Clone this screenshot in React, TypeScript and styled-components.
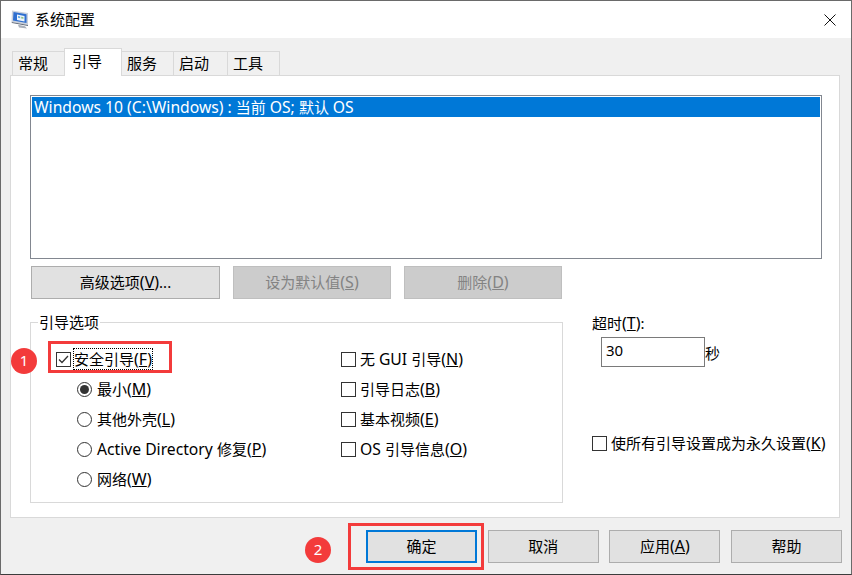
import React from 'react';
import styled, { createGlobalStyle } from 'styled-components';

const GlobalStyle = createGlobalStyle`
  html, body {
    margin: 0;
    background: #fff;
  }
  * {
    box-sizing: border-box;
  }
  body {
    font-family: "Noto Sans", "Noto Sans CJK SC", sans-serif;
    font-size: 15px;
    color: #000;
  }
`;

const Window = styled.div`
  position: relative;
  width: 852px;
  height: 575px;
  display: flex;
  flex-direction: column;
  overflow: hidden;
  border: 1px solid #6a6a6a;
  border-bottom-color: #3c3c3c;
`;

const TitleBar = styled.header`
  height: 37px;
  flex: none;
  display: flex;
  align-items: center;
  padding-left: 10px;
  background: #fff;
`;

const Title = styled.span`
  margin: 0 0 2px 4px;
  line-height: 20px;
`;

const CloseIcon = styled.svg`
  margin-left: auto;
  margin-right: 15px;
`;

const Main = styled.main`
  flex: 1;
  display: flex;
  flex-direction: column;
  padding: 10px 9px 0;
  background: #f0f0f0;
`;

const TabStrip = styled.div`
  height: 28px;
  display: flex;
  align-items: flex-end;
  padding-left: 3px;
  margin-bottom: -1px;
`;

const Tab = styled.div<{ $active?: boolean; $w: number }>`
  position: relative;
  z-index: ${(p) => (p.$active ? 1 : 0)};
  width: ${(p) => p.$w}px;
  height: ${(p) => (p.$active ? 28 : 25)}px;
  margin-left: -1px;
  padding-left: ${(p) => (p.$active ? 7 : 5)}px;
  line-height: ${(p) => (p.$active ? 24 : 23)}px;
  background: ${(p) => (p.$active ? '#fff' : '#f0f0f0')};
  border: 1px solid #d9d9d9;
  border-bottom: ${(p) => (p.$active ? 'none' : '1px solid #d9d9d9')};
`;

const Panel = styled.section`
  width: 830px;
  height: 443px;
  padding: 19px 17px 0 19px;
  background: #fff;
  border: 1px solid #d9d9d9;
`;

const ListBox = styled.div`
  height: 164px;
  padding: 1px;
  border: 1px solid #828790;
`;

const ListRow = styled.div`
  height: 20px;
  padding-left: 2px;
  line-height: 20px;
  color: #fff;
  background: #0078d7;
  white-space: nowrap;
`;

const Latin = styled.span`
  font-size: 15.7px;
`;

const AccessKey = styled.span`
  font-size: 16px;
`;

const ActionRow = styled.div`
  display: flex;
  gap: 13px;
  margin: 7px 0 13px 1px;
`;

const Button = styled.button<{ $w: number; $primary?: boolean }>`
  width: ${(p) => p.$w}px;
  height: 33px;
  padding: 0 0 2px;
  font: inherit;
  color: #000;
  background: #e1e1e1;
  border: ${(p) => (p.$primary ? '2px solid #0078d7' : '1px solid #adadad')};

  &:disabled {
    color: #838383;
    background: #cccccc;
    border-color: #bfbfbf;
  }
`;

const OptionsRow = styled.div`
  display: flex;
  gap: 29px;
`;

const GroupBox = styled.fieldset`
  flex: none;
  width: 533px;
  height: 191px;
  margin: 0;
  padding: 12px 0 0 25px;
  display: grid;
  grid-template-columns: 285px 1fr;
  border: 1px solid #d9d9d9;
`;

const GroupTitle = styled.legend`
  margin-left: -18px;
  padding: 0 1px;
  line-height: 20px;
`;

const OptionColumn = styled.div`
  display: flex;
  flex-direction: column;
`;

const Option = styled.label<{ $indent?: boolean }>`
  height: 30px;
  display: flex;
  align-items: center;
  gap: ${(p) => (p.$indent ? 5 : 4)}px;
  margin-left: ${(p) => (p.$indent ? 21 : 0)}px;
  line-height: 20px;
  white-space: nowrap;
`;

const Box = styled.span`
  flex: none;
  width: 15px;
  height: 15px;
  display: flex;
  border: 1px solid #333;
`;

const Radio = styled.span<{ $on?: boolean }>`
  flex: none;
  width: 15px;
  height: 15px;
  display: flex;
  align-items: center;
  justify-content: center;
  border: 1px solid #333;
  border-radius: 50%;

  &::after {
    content: '';
    display: ${(p) => (p.$on ? 'block' : 'none')};
    width: 9px;
    height: 9px;
    border-radius: 50%;
    background: #333;
  }
`;

const FocusText = styled.span`
  margin-left: -1px;
  outline: 1px dotted #000;
`;

const SideColumn = styled.div`
  display: flex;
  flex-direction: column;
`;

const TimeoutRow = styled.div`
  display: flex;
  align-items: center;
  margin: 3px 0 0 9px;
`;

const TimeoutInput = styled.div`
  width: 104px;
  height: 30px;
  padding-left: 4px;
  line-height: 25px;
  border: 1px solid #7a7a7a;
`;

const SideOption = styled(Option)`
  margin-top: 61px;
`;

const Footer = styled.footer`
  display: flex;
  justify-content: flex-end;
  gap: 10.67px;
  margin-top: 12px;
`;

const RedFrame = styled.div<{ $x: number; $y: number; $w: number; $h: number }>`
  position: absolute;
  left: ${(p) => p.$x}px;
  top: ${(p) => p.$y}px;
  width: ${(p) => p.$w}px;
  height: ${(p) => p.$h}px;
  border: 3px solid #f33b3b;
  pointer-events: none;
`;

const Badge = styled.div<{ $x: number; $y: number }>`
  position: absolute;
  left: ${(p) => p.$x}px;
  top: ${(p) => p.$y}px;
  width: 26px;
  height: 26px;
  border-radius: 50%;
  background: #f33b3b;
  color: #fff;
  font-size: 15px;
  line-height: 25px;
  text-align: center;
`;

const AppIcon = () => (
  <svg width="20" height="20" viewBox="0 0 20 20">
    <path d="M1 .5 17 3v12L.5 12z" fill="#c9d0dc" />
    <path d="M2.5 2 15.5 4.3V13L2 10.5z" fill="#2f6fd0" />
    <path d="M6 4.6 13.5 6v5.4L6 10z" fill="#eef5fb" />
    <path d="M7 6l2.2.4v1.8L7 7.8z" fill="#5fa8e8" />
    <path d="M10.2 6.8l2.3.4v1.6l-2.3-.4z" fill="#8cc084" />
    <path d="M.5 12 17 15v1L1 13z" fill="#5d6675" />
    <path d="M7 14.8l7 1.4 2 2.3-8-1z" fill="#aab0ba" />
  </svg>
);

const Check = () => (
  <svg width="13" height="13" viewBox="0 0 13 13">
    <path d="M2 6.5 5 9.5 11 3" fill="none" stroke="#333" strokeWidth="1.3" />
  </svg>
);

const Key = ({ k }: { k: string }) => (
  <AccessKey>
    (<u>{k}</u>)
  </AccessKey>
);

export default function App() {
  return (
    <>
      <GlobalStyle />
      <Window>
        <TitleBar>
          <AppIcon />
          <Title>系统配置</Title>
          <CloseIcon width="12" height="12" viewBox="0 0 12 12">
            <path d="M0.5 0.5 11.5 11.5M11.5 0.5 0.5 11.5" stroke="#111" strokeWidth="1" />
          </CloseIcon>
        </TitleBar>
        <Main>
          <TabStrip>
            <Tab $w={53}>常规</Tab>
            <Tab $w={58} $active>
              引导
            </Tab>
            <Tab $w={53}>服务</Tab>
            <Tab $w={55}>启动</Tab>
            <Tab $w={53}>工具</Tab>
          </TabStrip>
          <Panel>
            <ListBox>
              <ListRow>
                <Latin>Windows 10 (C:\Windows) : </Latin>当前 <Latin>OS; </Latin>默认 <Latin>OS</Latin>
              </ListRow>
            </ListBox>
            <ActionRow>
              <Button $w={189}>
                高级选项
                <Key k="V" />
                ...
              </Button>
              <Button $w={158} disabled>
                设为默认值
                <Key k="S" />
              </Button>
              <Button $w={158} disabled>
                删除
                <Key k="D" />
              </Button>
            </ActionRow>
            <OptionsRow>
              <GroupBox>
                <GroupTitle>引导选项</GroupTitle>
                <OptionColumn>
                  <Option>
                    <Box>
                      <Check />
                    </Box>
                    <FocusText>
                      安全引导
                      <Key k="F" />
                    </FocusText>
                  </Option>
                  <Option $indent>
                    <Radio $on />
                    <span>
                      最小
                      <Key k="M" />
                    </span>
                  </Option>
                  <Option $indent>
                    <Radio />
                    <span>
                      其他外壳
                      <Key k="L" />
                    </span>
                  </Option>
                  <Option $indent>
                    <Radio />
                    <span>
                      <Latin>Active Directory </Latin>修复
                      <Key k="P" />
                    </span>
                  </Option>
                  <Option $indent>
                    <Radio />
                    <span>
                      网络
                      <Key k="W" />
                    </span>
                  </Option>
                </OptionColumn>
                <OptionColumn>
                  <Option>
                    <Box />
                    <span>
                      无 <Latin>GUI </Latin>引导
                      <Key k="N" />
                    </span>
                  </Option>
                  <Option>
                    <Box />
                    <span>
                      引导日志
                      <Key k="B" />
                    </span>
                  </Option>
                  <Option>
                    <Box />
                    <span>
                      基本视频
                      <Key k="E" />
                    </span>
                  </Option>
                  <Option>
                    <Box />
                    <span>
                      <Latin>OS </Latin>引导信息
                      <Key k="O" />
                    </span>
                  </Option>
                </OptionColumn>
              </GroupBox>
              <SideColumn>
                <span>
                  超时
                  <Key k="T" />:
                </span>
                <TimeoutRow>
                  <TimeoutInput>30</TimeoutInput>
                  <span>秒</span>
                </TimeoutRow>
                <SideOption>
                  <Box />
                  <span>
                    使所有引导设置成为永久设置
                    <Key k="K" />
                  </span>
                </SideOption>
              </SideColumn>
            </OptionsRow>
          </Panel>
          <Footer>
            <Button $w={111} $primary>
              确定
            </Button>
            <Button $w={111}>取消</Button>
            <Button $w={111}>
              应用
              <Key k="A" />
            </Button>
            <Button $w={111}>帮助</Button>
          </Footer>
        </Main>
        <RedFrame $x={47} $y={340} $w={124} $h={32} />
        <Badge $x={10} $y={347}>
          1
        </Badge>
        <RedFrame $x={347} $y={522} $w={136} $h={47} />
        <Badge $x={304} $y={536}>
          2
        </Badge>
      </Window>
    </>
  );
}
